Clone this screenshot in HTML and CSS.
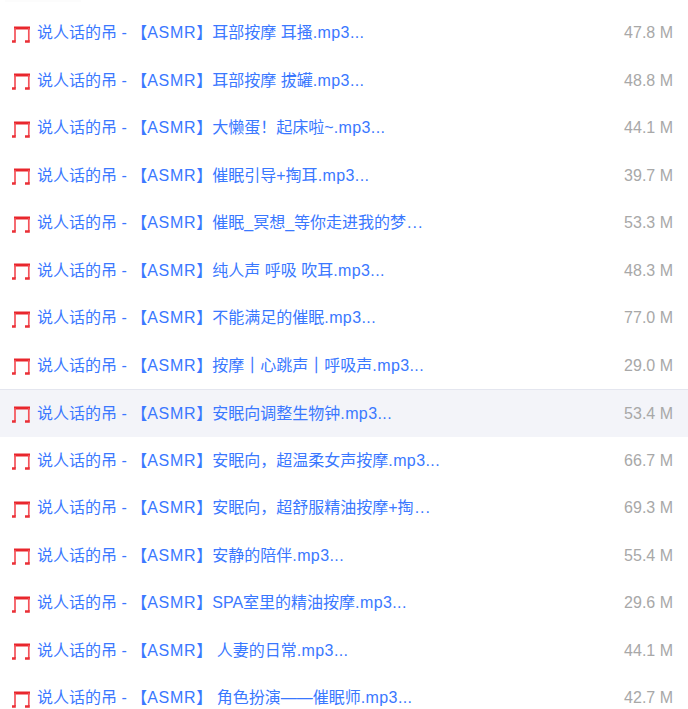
FILE: index.html
```html
<!DOCTYPE html>
<html lang="zh-CN">
<head>
<meta charset="utf-8">
<title>文件列表</title>
<link rel="stylesheet" href="styles.css">
</head>
<body>
<svg class="sprite" width="0" height="0" aria-hidden="true"><defs><symbol id="note" viewBox="0 0 18 17"><path class="note-bar" d="M2 0.5h16v3H2z"/><path class="note-stem" d="M3 2v13M16.8 2v13"/><path class="note-head" d="M0 14.2h3.8v2.6H0zM13 14.2h4.8v2.6H13z"/></symbol></defs></svg>
<div class="top-fade"></div>
<ul class="list">
<li class="row"><svg class="icon"><use href="#note"/></svg><span class="name">说人话的吊 - 【<span class="tag">ASMR</span>】耳部按摩 耳搔<span class="ext">.mp3...</span></span><span class="size">47.8 M</span></li>
<li class="row"><svg class="icon"><use href="#note"/></svg><span class="name">说人话的吊 - 【<span class="tag">ASMR</span>】耳部按摩 拔罐<span class="ext">.mp3...</span></span><span class="size">48.8 M</span></li>
<li class="row"><svg class="icon"><use href="#note"/></svg><span class="name">说人话的吊 - 【<span class="tag">ASMR</span>】大懒蛋！起床啦~<span class="ext">.mp3...</span></span><span class="size">44.1 M</span></li>
<li class="row"><svg class="icon"><use href="#note"/></svg><span class="name">说人话的吊 - 【<span class="tag">ASMR</span>】催眠引导+掏耳<span class="ext">.mp3...</span></span><span class="size">39.7 M</span></li>
<li class="row"><svg class="icon"><use href="#note"/></svg><span class="name">说人话的吊 - 【<span class="tag">ASMR</span>】催眠_冥想_等你走进我的梦<span class="dots">...</span></span><span class="size">53.3 M</span></li>
<li class="row"><svg class="icon"><use href="#note"/></svg><span class="name">说人话的吊 - 【<span class="tag">ASMR</span>】纯人声 呼吸 吹耳<span class="ext">.mp3...</span></span><span class="size">48.3 M</span></li>
<li class="row"><svg class="icon"><use href="#note"/></svg><span class="name">说人话的吊 - 【<span class="tag">ASMR</span>】不能满足的催眠<span class="ext">.mp3...</span></span><span class="size">77.0 M</span></li>
<li class="row"><svg class="icon"><use href="#note"/></svg><span class="name">说人话的吊 - 【<span class="tag">ASMR</span>】按摩<span class="bar">｜</span>心跳声<span class="bar">｜</span>呼吸声<span class="ext">.mp3...</span></span><span class="size">29.0 M</span></li>
<li class="row row-active"><svg class="icon"><use href="#note"/></svg><span class="name">说人话的吊 - 【<span class="tag">ASMR</span>】安眠向调整生物钟<span class="ext">.mp3...</span></span><span class="size">53.4 M</span></li>
<li class="row"><svg class="icon"><use href="#note"/></svg><span class="name">说人话的吊 - 【<span class="tag">ASMR</span>】安眠向，超温柔女声按摩<span class="ext">.mp3...</span></span><span class="size">66.7 M</span></li>
<li class="row"><svg class="icon"><use href="#note"/></svg><span class="name">说人话的吊 - 【<span class="tag">ASMR</span>】安眠向，超舒服精油按摩+掏<span class="dots">...</span></span><span class="size">69.3 M</span></li>
<li class="row"><svg class="icon"><use href="#note"/></svg><span class="name">说人话的吊 - 【<span class="tag">ASMR</span>】安静的陪伴<span class="ext">.mp3...</span></span><span class="size">55.4 M</span></li>
<li class="row"><svg class="icon"><use href="#note"/></svg><span class="name">说人话的吊 - 【<span class="tag">ASMR</span>】SPA室里的精油按摩<span class="ext">.mp3...</span></span><span class="size">29.6 M</span></li>
<li class="row"><svg class="icon"><use href="#note"/></svg><span class="name">说人话的吊 - 【<span class="tag">ASMR</span>】 人妻的日常<span class="ext">.mp3...</span></span><span class="size">44.1 M</span></li>
<li class="row"><svg class="icon"><use href="#note"/></svg><span class="name">说人话的吊 - 【<span class="tag">ASMR</span>】 角色扮演——催眠师<span class="ext">.mp3...</span></span><span class="size">42.7 M</span></li>
</ul>
</body>
</html>
```
FILE: styles.css
```css
html, body {
  margin: 0;
  padding: 0;
  background: #fff;
  overflow: hidden;
}
.sprite {
  display: block;
  height: 0;
}
.top-fade {
  width: 76px;
  height: 2px;
  margin-left: 5px;
  background: #fcfcfc;
}
.list {
  list-style: none;
  margin: 0;
  padding: 7.25px 0 0;
  font-family: "Liberation Sans", "Noto Sans CJK SC", sans-serif;
  font-size: 16px;
}
.row {
  display: flex;
  align-items: center;
  height: 47.5px;
  box-sizing: border-box;
  padding: 0 15px 0 12px;
}
.row-active {
  background: #f3f4f9;
  border-top: 1px solid #e4e6ef;
}
.icon {
  width: 18px;
  height: 17px;
  flex: none;
  margin-top: 2px;
}
.note-bar { fill: #e8262c; }
.note-stem { stroke: #f4525a; stroke-width: 1.7; fill: none; }
.note-head { fill: #ea2f36; }
.name {
  flex: 1;
  margin-left: 7px;
  padding-bottom: 4px;
  color: #3a78ff;
  white-space: nowrap;
}
.tag { letter-spacing: 0.7px; }
.ext { letter-spacing: 0.4px; }
.dots { letter-spacing: 1px; margin-left: 1px; }
.bar { -webkit-text-stroke: 0.5px #3a78ff; }
.size {
  color: #a8a8a8;
}
```
